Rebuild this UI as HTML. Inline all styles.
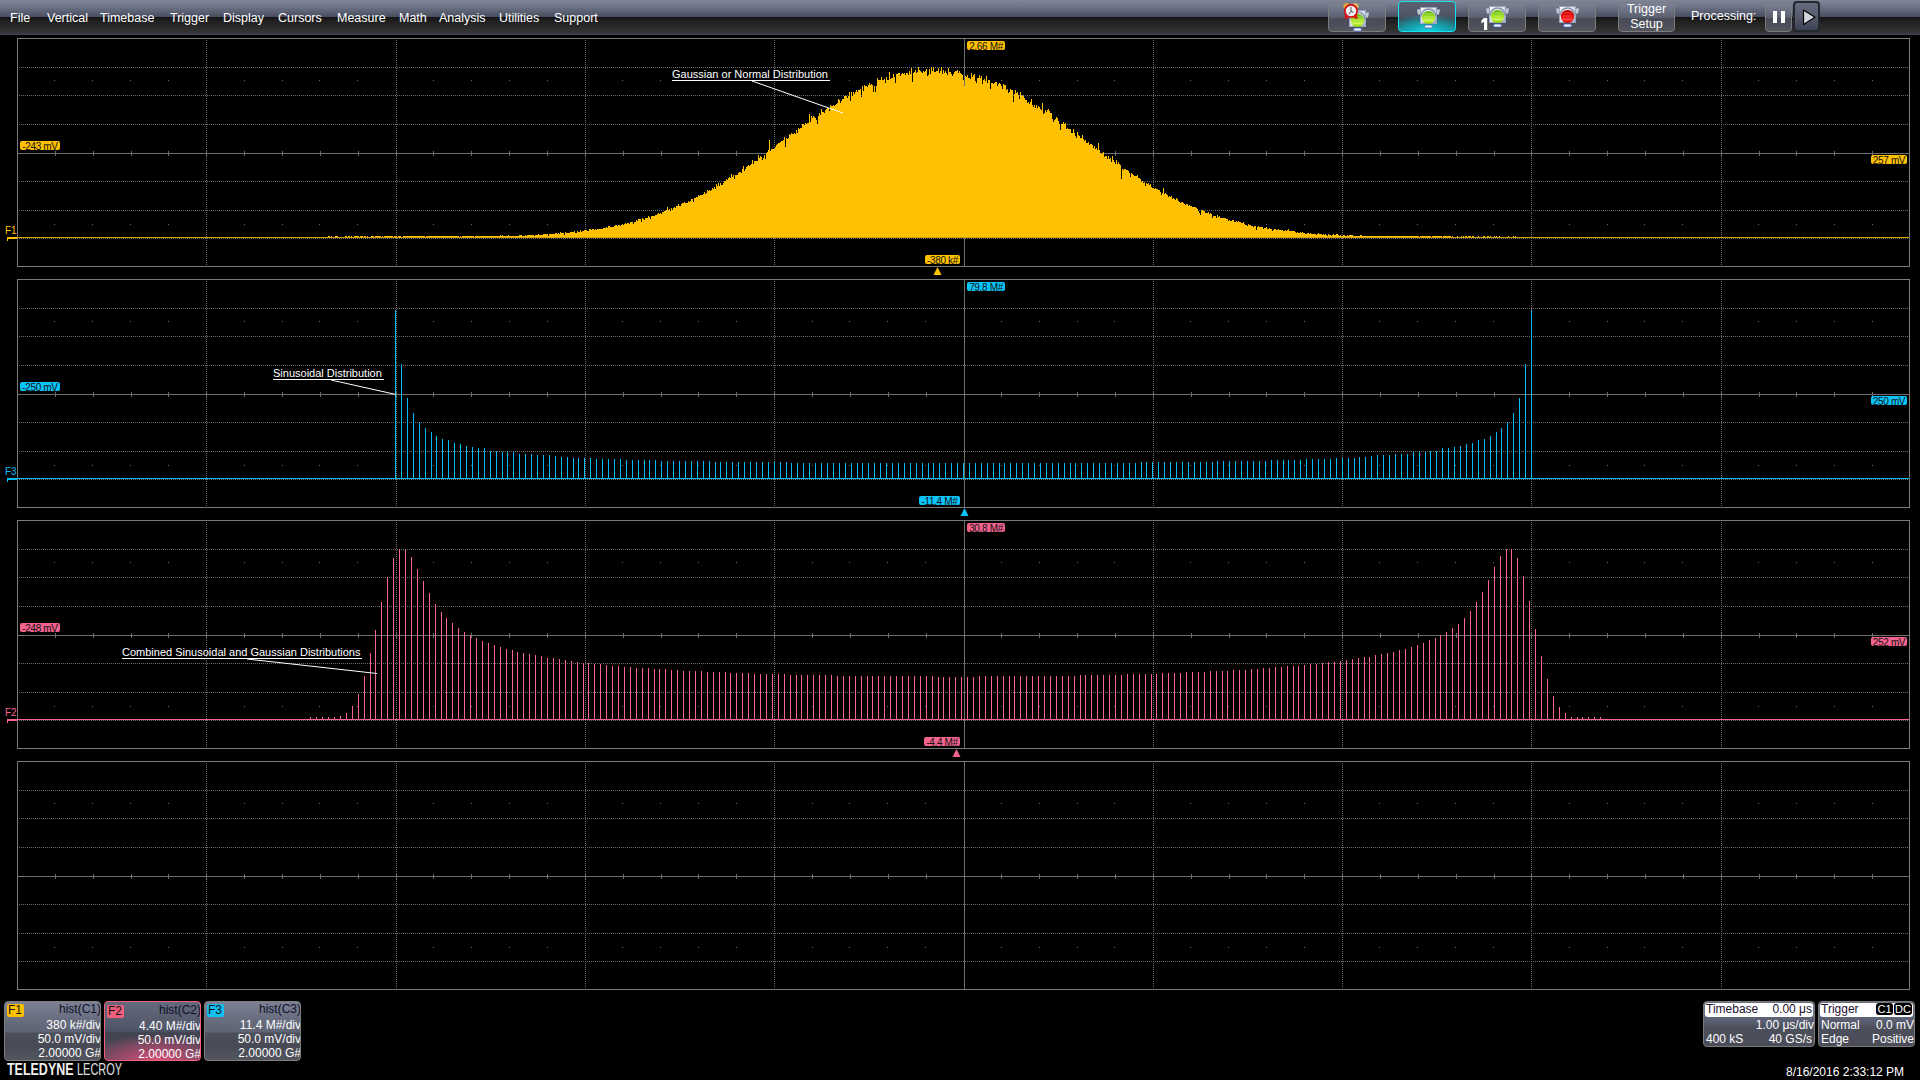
<!DOCTYPE html>
<html><head><meta charset="utf-8">
<style>
html,body{margin:0;padding:0;background:#000;width:1920px;height:1080px;overflow:hidden;}
body{position:relative;font-family:"Liberation Sans",sans-serif;}
#menubar{position:absolute;left:0;top:0;width:1920px;height:35px;
 background:linear-gradient(to bottom,#80869a 0px,#737a8c 5px,#5e6376 11px,#474c5f 16.9px,#131313 17px,#1b1b1b 19px,#222 23px,#2c2c2c 28px,#343434 33px,#3b414e 34px,#3b414e 35px);}
.mi{position:absolute;top:11px;font-size:12.5px;line-height:14px;color:#fff;white-space:nowrap;}
svg{position:absolute;left:0;top:0;}
.lbl{position:absolute;height:9px;font-size:10px;line-height:11px;color:#111;text-align:center;border-radius:2px;white-space:nowrap;overflow:hidden;letter-spacing:-0.35px;}
.btn{position:absolute;top:2px;width:56px;height:28px;border:1px solid #7c7c7c;border-radius:4px;
 background:linear-gradient(to bottom,#7d8394 0px,#6a7081 8px,#5b6070 14.5px,#4a4d57 15px,#4c4f59 22px,#54575f 28px);}
.btn.sel{border-color:#10e4f2;background:radial-gradient(ellipse 75% 60% at 50% 100%,rgba(20,215,225,0.95) 0%,rgba(16,170,182,0.8) 50%,rgba(16,120,130,0) 100%),linear-gradient(to bottom,#5c6172 0px,#535869 10px,#4a4e5e 16px,#3e4452 17px,#2f5a66 24px,#1f8f9a 29px);}
.txt{position:absolute;color:#fff;white-space:nowrap;}
.desc{position:absolute;top:1001px;width:95px;height:58px;border:1px solid #7e7e7e;border-radius:4px;overflow:hidden;
 background:linear-gradient(to bottom,#7b8193 0px,#6b7082 14px,#5f6474 30px,#4d505b 31px,#474a55 44px,#53565f 58px);}
.desc .badge{position:absolute;left:2px;top:2px;width:17px;height:13px;border-radius:2px;font-size:12px;line-height:13px;color:#111;text-indent:1px;}
.desc .l{position:absolute;right:-1px;font-size:12px;line-height:14px;color:#fff;white-space:nowrap;}
.desc .h{color:#10102a;}
.info{position:absolute;top:1001px;height:44px;border:1px solid #7a7a7a;border-radius:4px;overflow:hidden;
 background:linear-gradient(to bottom,#6a7080 0px,#6a7080 15px,#5f6577 15px,#565b6b 21px,#4c4f5c 25px,#4a4d58 44px);}
.info .ws{position:absolute;left:1px;right:1px;top:1px;height:14px;background:#fff;border-radius:3px;}
.info .r{position:absolute;font-size:12px;line-height:14px;color:#fff;white-space:nowrap;}
.info .dk{color:#1c1030;}
</style></head><body>
<div id="menubar"></div>
<span class="mi" style="left:10px">File</span>
<span class="mi" style="left:47px">Vertical</span>
<span class="mi" style="left:100px">Timebase</span>
<span class="mi" style="left:170px">Trigger</span>
<span class="mi" style="left:223px">Display</span>
<span class="mi" style="left:278px">Cursors</span>
<span class="mi" style="left:337px">Measure</span>
<span class="mi" style="left:399px">Math</span>
<span class="mi" style="left:439px">Analysis</span>
<span class="mi" style="left:499px">Utilities</span>
<span class="mi" style="left:554px">Support</span>
<!-- toolbar buttons -->
<div class="btn" style="left:1328px"></div>
<div class="btn sel" style="left:1398px;top:1px;height:29px"></div>
<div class="btn" style="left:1468px"></div>
<div class="btn" style="left:1538px"></div>
<svg width="1920" height="40" style="z-index:2">
 <defs>
  <linearGradient id="mon" x1="0" y1="0" x2="1" y2="1"><stop offset="0" stop-color="#ffffff"/><stop offset="0.55" stop-color="#d4dbea"/><stop offset="1" stop-color="#95a3c0"/></linearGradient>
  <linearGradient id="grn" x1="0" y1="0" x2="0" y2="1"><stop offset="0" stop-color="#5fae10"/><stop offset="0.35" stop-color="#8fd818"/><stop offset="0.75" stop-color="#c8f53a"/><stop offset="1" stop-color="#7cc010"/></linearGradient>
  <linearGradient id="red" x1="0" y1="0" x2="0" y2="1"><stop offset="0" stop-color="#b00000"/><stop offset="0.4" stop-color="#f00000"/><stop offset="0.8" stop-color="#ff2a2a"/><stop offset="1" stop-color="#c00000"/></linearGradient>
 </defs>
 <g transform="translate(1349,10)">
  <path d="M-3 2.5h3v5h-2zM17 2.5h3l-1 5h-2z" fill="#c4ccdc"/>
  <rect x="0" y="0" width="17" height="17" fill="url(#mon)"/>
  <rect x="0.5" y="0.5" width="16" height="16" fill="none" stroke="#9aa6bc" stroke-width="1"/>
  <path d="M1.0 9.5a7.5 7.5 0 0 1 15 0" fill="none" stroke="#8c95a8" stroke-width="1.6"/>
  <circle cx="8.5" cy="10.5" r="6.6" fill="url(#grn)"/>
  <path d="M4.5 7.0h8M3.5 10.0h10M4.0 13.0h9" stroke="#ffffff" stroke-opacity="0.35" stroke-width="0.9"/>
  <rect x="4.5" y="18" width="8" height="3" rx="1.5" fill="#eef3ff" stroke="#3f66c0" stroke-width="0.8"/>
 </g>
 <g transform="translate(1351,11)">
  <ellipse cx="-4.8" cy="-5.2" rx="3" ry="2.6" fill="#e2a440" transform="rotate(-35 -4.8 -5.2)"/>
  <ellipse cx="4.8" cy="-5.2" rx="3" ry="2.6" fill="#d8b868" transform="rotate(35 4.8 -5.2)"/>
  <path d="M-5.5 4L-7 7.5H-2.5ZM5.5 4L7 7.5H2.5Z" fill="#e00808"/>
  <circle cx="0" cy="0" r="7" fill="#d40a0a"/>
  <circle cx="0" cy="0" r="5.3" fill="#f2f2f4"/>
  <path d="M0 0V-4M0 0L2.5 1.5M0 0L-2 3.5" stroke="#404040" stroke-width="0.9"/>
 </g>
 <g transform="translate(1420,7)">
  <path d="M-3 2.5h3v5h-2zM17 2.5h3l-1 5h-2z" fill="#c4ccdc"/>
  <rect x="0" y="0" width="17" height="17" fill="url(#mon)"/>
  <rect x="0.5" y="0.5" width="16" height="16" fill="none" stroke="#9aa6bc" stroke-width="1"/>
  <path d="M1.0 9.5a7.5 7.5 0 0 1 15 0" fill="none" stroke="#8c95a8" stroke-width="1.6"/>
  <circle cx="8.5" cy="10.5" r="6.6" fill="url(#grn)"/>
  <path d="M4.5 7.0h8M3.5 10.0h10M4.0 13.0h9" stroke="#ffffff" stroke-opacity="0.35" stroke-width="0.9"/>
  <rect x="4.5" y="18" width="8" height="3" rx="1.5" fill="#eef3ff" stroke="#3f66c0" stroke-width="0.8"/>
 </g>
 <g transform="translate(1489,6)">
  <path d="M-3 2.5h3v5h-2zM17 2.5h3l-1 5h-2z" fill="#c4ccdc"/>
  <rect x="0" y="0" width="17" height="17" fill="url(#mon)"/>
  <rect x="0.5" y="0.5" width="16" height="16" fill="none" stroke="#9aa6bc" stroke-width="1"/>
  <path d="M1.0 9.5a7.5 7.5 0 0 1 15 0" fill="none" stroke="#8c95a8" stroke-width="1.6"/>
  <circle cx="8.5" cy="10.5" r="6.6" fill="url(#grn)"/>
  <path d="M4.5 7.0h8M3.5 10.0h10M4.0 13.0h9" stroke="#ffffff" stroke-opacity="0.35" stroke-width="0.9"/>
  <rect x="4.5" y="18" width="8" height="3" rx="1.5" fill="#eef3ff" stroke="#3f66c0" stroke-width="0.8"/>
 </g>
 <path d="M1484 18h3.2v12h-3.2v-8.2l-2.6 1.6v-2.8z" fill="#fff"/>
 <g transform="translate(1559,6)">
  <path d="M-3 2.5h3v5h-2zM17 2.5h3l-1 5h-2z" fill="#c4ccdc"/>
  <rect x="0" y="0" width="17" height="17" fill="url(#mon)"/>
  <rect x="0.5" y="0.5" width="16" height="16" fill="none" stroke="#9aa6bc" stroke-width="1"/>
  <path d="M1.0 9.5a7.5 7.5 0 0 1 15 0" fill="none" stroke="#8c95a8" stroke-width="1.6"/>
  <circle cx="8.5" cy="10.5" r="6.6" fill="url(#red)"/>
  <path d="M4.5 7.0h8M3.5 10.0h10M4.0 13.0h9" stroke="#ffffff" stroke-opacity="0.35" stroke-width="0.9"/>
  <rect x="4.5" y="18" width="8" height="3" rx="1.5" fill="#eef3ff" stroke="#3f66c0" stroke-width="0.8"/>
 </g>
</svg>
<div class="btn" style="left:1618px;width:55px"></div>
<div class="txt" style="left:1618px;top:2px;width:57px;text-align:center;font-size:12.5px;line-height:14.5px;z-index:3">Trigger<br>Setup</div>
<div class="txt" style="left:1691px;top:9px;font-size:12.5px;line-height:14px">Processing:</div>
<div class="btn" style="left:1765px;width:25px"></div>
<div style="position:absolute;left:1773px;top:11px;width:4px;height:12px;background:#fff;z-index:3"></div>
<div style="position:absolute;left:1781px;top:11px;width:4px;height:12px;background:#fff;z-index:3"></div>
<div class="btn" style="left:1793px;top:1px;width:23px;height:27px;border:2px solid #25272e;background:linear-gradient(to bottom,#666c7e 0px,#565b6c 14px,#454a5c 22px,#3a3f55 28px)"></div>
<svg width="1920" height="40" style="z-index:3"><path d="M1803.5 10L1815 17.2L1803.5 24.5Z" fill="#d4d6de" stroke="#000" stroke-width="1.2" stroke-linejoin="round"/></svg>

<svg width="1920" height="1000" font-family="Liberation Sans">
<path d="M19 67.5H1908" stroke="#6e6e6e" stroke-dasharray="1 1"/>
<path d="M19 95.5H1908" stroke="#6e6e6e" stroke-dasharray="1 1"/>
<path d="M19 124.5H1908" stroke="#6e6e6e" stroke-dasharray="1 1"/>
<path d="M19 181.5H1908" stroke="#6e6e6e" stroke-dasharray="1 1"/>
<path d="M19 210.5H1908" stroke="#6e6e6e" stroke-dasharray="1 1"/>
<path d="M19 238.5H1908" stroke="#6e6e6e" stroke-dasharray="1 1"/>
<path d="M206.5 40V265" stroke="#6e6e6e" stroke-dasharray="1 1"/>
<path d="M396.5 40V265" stroke="#6e6e6e" stroke-dasharray="1 1"/>
<path d="M585.5 40V265" stroke="#6e6e6e" stroke-dasharray="1 1"/>
<path d="M774.5 40V265" stroke="#6e6e6e" stroke-dasharray="1 1"/>
<path d="M1153.5 40V265" stroke="#6e6e6e" stroke-dasharray="1 1"/>
<path d="M1342.5 40V265" stroke="#6e6e6e" stroke-dasharray="1 1"/>
<path d="M1531.5 40V265" stroke="#6e6e6e" stroke-dasharray="1 1"/>
<path d="M1721.5 40V265" stroke="#6e6e6e" stroke-dasharray="1 1"/>
<path d="M17 153.5H1909" stroke="#6e6e6e"/>
<path d="M964.5 38V266" stroke="#6e6e6e"/>
<path d="M55.5 151v5M93.5 151v5M131.5 151v5M168.5 151v5M206.5 151v5M244.5 151v5M282.5 151v5M320.5 151v5M358.5 151v5M396.5 151v5M433.5 151v5M471.5 151v5M509.5 151v5M547.5 151v5M585.5 151v5M623.5 151v5M661.5 151v5M698.5 151v5M736.5 151v5M774.5 151v5M812.5 151v5M850.5 151v5M888.5 151v5M926.5 151v5M964.5 151v5M1001.5 151v5M1039.5 151v5M1077.5 151v5M1115.5 151v5M1153.5 151v5M1191.5 151v5M1229.5 151v5M1266.5 151v5M1304.5 151v5M1342.5 151v5M1380.5 151v5M1418.5 151v5M1456.5 151v5M1494.5 151v5M1531.5 151v5M1569.5 151v5M1607.5 151v5M1645.5 151v5M1683.5 151v5M1721.5 151v5M1759.5 151v5M1796.5 151v5M1834.5 151v5M1872.5 151v5" stroke="#6e6e6e"/>
<path d="M54 80h1v1h-1zM92 80h1v1h-1zM130 80h1v1h-1zM168 80h1v1h-1zM244 80h1v1h-1zM282 80h1v1h-1zM319 80h1v1h-1zM357 80h1v1h-1zM433 80h1v1h-1zM471 80h1v1h-1zM509 80h1v1h-1zM547 80h1v1h-1zM622 80h1v1h-1zM660 80h1v1h-1zM698 80h1v1h-1zM736 80h1v1h-1zM812 80h1v1h-1zM849 80h1v1h-1zM887 80h1v1h-1zM925 80h1v1h-1zM1001 80h1v1h-1zM1039 80h1v1h-1zM1077 80h1v1h-1zM1114 80h1v1h-1zM1190 80h1v1h-1zM1228 80h1v1h-1zM1266 80h1v1h-1zM1304 80h1v1h-1zM1379 80h1v1h-1zM1417 80h1v1h-1zM1455 80h1v1h-1zM1493 80h1v1h-1zM1569 80h1v1h-1zM1607 80h1v1h-1zM1644 80h1v1h-1zM1682 80h1v1h-1zM1758 80h1v1h-1zM1796 80h1v1h-1zM1834 80h1v1h-1zM1872 80h1v1h-1zM54 224h1v1h-1zM92 224h1v1h-1zM130 224h1v1h-1zM168 224h1v1h-1zM244 224h1v1h-1zM282 224h1v1h-1zM319 224h1v1h-1zM357 224h1v1h-1zM433 224h1v1h-1zM471 224h1v1h-1zM509 224h1v1h-1zM547 224h1v1h-1zM622 224h1v1h-1zM660 224h1v1h-1zM698 224h1v1h-1zM736 224h1v1h-1zM812 224h1v1h-1zM849 224h1v1h-1zM887 224h1v1h-1zM925 224h1v1h-1zM1001 224h1v1h-1zM1039 224h1v1h-1zM1077 224h1v1h-1zM1114 224h1v1h-1zM1190 224h1v1h-1zM1228 224h1v1h-1zM1266 224h1v1h-1zM1304 224h1v1h-1zM1379 224h1v1h-1zM1417 224h1v1h-1zM1455 224h1v1h-1zM1493 224h1v1h-1zM1569 224h1v1h-1zM1607 224h1v1h-1zM1644 224h1v1h-1zM1682 224h1v1h-1zM1758 224h1v1h-1zM1796 224h1v1h-1zM1834 224h1v1h-1zM1872 224h1v1h-1z" fill="#6e6e6e"/>
<rect x="17.5" y="38.5" width="1892" height="228" fill="none" stroke="#7a7a7a"/>
<path d="M19 308.5H1908" stroke="#6e6e6e" stroke-dasharray="1 1"/>
<path d="M19 336.5H1908" stroke="#6e6e6e" stroke-dasharray="1 1"/>
<path d="M19 365.5H1908" stroke="#6e6e6e" stroke-dasharray="1 1"/>
<path d="M19 422.5H1908" stroke="#6e6e6e" stroke-dasharray="1 1"/>
<path d="M19 451.5H1908" stroke="#6e6e6e" stroke-dasharray="1 1"/>
<path d="M19 479.5H1908" stroke="#6e6e6e" stroke-dasharray="1 1"/>
<path d="M206.5 281V506" stroke="#6e6e6e" stroke-dasharray="1 1"/>
<path d="M396.5 281V506" stroke="#6e6e6e" stroke-dasharray="1 1"/>
<path d="M585.5 281V506" stroke="#6e6e6e" stroke-dasharray="1 1"/>
<path d="M774.5 281V506" stroke="#6e6e6e" stroke-dasharray="1 1"/>
<path d="M1153.5 281V506" stroke="#6e6e6e" stroke-dasharray="1 1"/>
<path d="M1342.5 281V506" stroke="#6e6e6e" stroke-dasharray="1 1"/>
<path d="M1531.5 281V506" stroke="#6e6e6e" stroke-dasharray="1 1"/>
<path d="M1721.5 281V506" stroke="#6e6e6e" stroke-dasharray="1 1"/>
<path d="M17 394.5H1909" stroke="#6e6e6e"/>
<path d="M964.5 279V507" stroke="#6e6e6e"/>
<path d="M55.5 392v5M93.5 392v5M131.5 392v5M168.5 392v5M206.5 392v5M244.5 392v5M282.5 392v5M320.5 392v5M358.5 392v5M396.5 392v5M433.5 392v5M471.5 392v5M509.5 392v5M547.5 392v5M585.5 392v5M623.5 392v5M661.5 392v5M698.5 392v5M736.5 392v5M774.5 392v5M812.5 392v5M850.5 392v5M888.5 392v5M926.5 392v5M964.5 392v5M1001.5 392v5M1039.5 392v5M1077.5 392v5M1115.5 392v5M1153.5 392v5M1191.5 392v5M1229.5 392v5M1266.5 392v5M1304.5 392v5M1342.5 392v5M1380.5 392v5M1418.5 392v5M1456.5 392v5M1494.5 392v5M1531.5 392v5M1569.5 392v5M1607.5 392v5M1645.5 392v5M1683.5 392v5M1721.5 392v5M1759.5 392v5M1796.5 392v5M1834.5 392v5M1872.5 392v5" stroke="#6e6e6e"/>
<path d="M54 321h1v1h-1zM92 321h1v1h-1zM130 321h1v1h-1zM168 321h1v1h-1zM244 321h1v1h-1zM282 321h1v1h-1zM319 321h1v1h-1zM357 321h1v1h-1zM433 321h1v1h-1zM471 321h1v1h-1zM509 321h1v1h-1zM547 321h1v1h-1zM622 321h1v1h-1zM660 321h1v1h-1zM698 321h1v1h-1zM736 321h1v1h-1zM812 321h1v1h-1zM849 321h1v1h-1zM887 321h1v1h-1zM925 321h1v1h-1zM1001 321h1v1h-1zM1039 321h1v1h-1zM1077 321h1v1h-1zM1114 321h1v1h-1zM1190 321h1v1h-1zM1228 321h1v1h-1zM1266 321h1v1h-1zM1304 321h1v1h-1zM1379 321h1v1h-1zM1417 321h1v1h-1zM1455 321h1v1h-1zM1493 321h1v1h-1zM1569 321h1v1h-1zM1607 321h1v1h-1zM1644 321h1v1h-1zM1682 321h1v1h-1zM1758 321h1v1h-1zM1796 321h1v1h-1zM1834 321h1v1h-1zM1872 321h1v1h-1zM54 465h1v1h-1zM92 465h1v1h-1zM130 465h1v1h-1zM168 465h1v1h-1zM244 465h1v1h-1zM282 465h1v1h-1zM319 465h1v1h-1zM357 465h1v1h-1zM433 465h1v1h-1zM471 465h1v1h-1zM509 465h1v1h-1zM547 465h1v1h-1zM622 465h1v1h-1zM660 465h1v1h-1zM698 465h1v1h-1zM736 465h1v1h-1zM812 465h1v1h-1zM849 465h1v1h-1zM887 465h1v1h-1zM925 465h1v1h-1zM1001 465h1v1h-1zM1039 465h1v1h-1zM1077 465h1v1h-1zM1114 465h1v1h-1zM1190 465h1v1h-1zM1228 465h1v1h-1zM1266 465h1v1h-1zM1304 465h1v1h-1zM1379 465h1v1h-1zM1417 465h1v1h-1zM1455 465h1v1h-1zM1493 465h1v1h-1zM1569 465h1v1h-1zM1607 465h1v1h-1zM1644 465h1v1h-1zM1682 465h1v1h-1zM1758 465h1v1h-1zM1796 465h1v1h-1zM1834 465h1v1h-1zM1872 465h1v1h-1z" fill="#6e6e6e"/>
<rect x="17.5" y="279.5" width="1892" height="228" fill="none" stroke="#7a7a7a"/>
<path d="M19 549.5H1908" stroke="#6e6e6e" stroke-dasharray="1 1"/>
<path d="M19 577.5H1908" stroke="#6e6e6e" stroke-dasharray="1 1"/>
<path d="M19 606.5H1908" stroke="#6e6e6e" stroke-dasharray="1 1"/>
<path d="M19 663.5H1908" stroke="#6e6e6e" stroke-dasharray="1 1"/>
<path d="M19 692.5H1908" stroke="#6e6e6e" stroke-dasharray="1 1"/>
<path d="M19 720.5H1908" stroke="#6e6e6e" stroke-dasharray="1 1"/>
<path d="M206.5 522V747" stroke="#6e6e6e" stroke-dasharray="1 1"/>
<path d="M396.5 522V747" stroke="#6e6e6e" stroke-dasharray="1 1"/>
<path d="M585.5 522V747" stroke="#6e6e6e" stroke-dasharray="1 1"/>
<path d="M774.5 522V747" stroke="#6e6e6e" stroke-dasharray="1 1"/>
<path d="M1153.5 522V747" stroke="#6e6e6e" stroke-dasharray="1 1"/>
<path d="M1342.5 522V747" stroke="#6e6e6e" stroke-dasharray="1 1"/>
<path d="M1531.5 522V747" stroke="#6e6e6e" stroke-dasharray="1 1"/>
<path d="M1721.5 522V747" stroke="#6e6e6e" stroke-dasharray="1 1"/>
<path d="M17 635.5H1909" stroke="#6e6e6e"/>
<path d="M964.5 520V748" stroke="#6e6e6e"/>
<path d="M55.5 633v5M93.5 633v5M131.5 633v5M168.5 633v5M206.5 633v5M244.5 633v5M282.5 633v5M320.5 633v5M358.5 633v5M396.5 633v5M433.5 633v5M471.5 633v5M509.5 633v5M547.5 633v5M585.5 633v5M623.5 633v5M661.5 633v5M698.5 633v5M736.5 633v5M774.5 633v5M812.5 633v5M850.5 633v5M888.5 633v5M926.5 633v5M964.5 633v5M1001.5 633v5M1039.5 633v5M1077.5 633v5M1115.5 633v5M1153.5 633v5M1191.5 633v5M1229.5 633v5M1266.5 633v5M1304.5 633v5M1342.5 633v5M1380.5 633v5M1418.5 633v5M1456.5 633v5M1494.5 633v5M1531.5 633v5M1569.5 633v5M1607.5 633v5M1645.5 633v5M1683.5 633v5M1721.5 633v5M1759.5 633v5M1796.5 633v5M1834.5 633v5M1872.5 633v5" stroke="#6e6e6e"/>
<path d="M54 562h1v1h-1zM92 562h1v1h-1zM130 562h1v1h-1zM168 562h1v1h-1zM244 562h1v1h-1zM282 562h1v1h-1zM319 562h1v1h-1zM357 562h1v1h-1zM433 562h1v1h-1zM471 562h1v1h-1zM509 562h1v1h-1zM547 562h1v1h-1zM622 562h1v1h-1zM660 562h1v1h-1zM698 562h1v1h-1zM736 562h1v1h-1zM812 562h1v1h-1zM849 562h1v1h-1zM887 562h1v1h-1zM925 562h1v1h-1zM1001 562h1v1h-1zM1039 562h1v1h-1zM1077 562h1v1h-1zM1114 562h1v1h-1zM1190 562h1v1h-1zM1228 562h1v1h-1zM1266 562h1v1h-1zM1304 562h1v1h-1zM1379 562h1v1h-1zM1417 562h1v1h-1zM1455 562h1v1h-1zM1493 562h1v1h-1zM1569 562h1v1h-1zM1607 562h1v1h-1zM1644 562h1v1h-1zM1682 562h1v1h-1zM1758 562h1v1h-1zM1796 562h1v1h-1zM1834 562h1v1h-1zM1872 562h1v1h-1zM54 706h1v1h-1zM92 706h1v1h-1zM130 706h1v1h-1zM168 706h1v1h-1zM244 706h1v1h-1zM282 706h1v1h-1zM319 706h1v1h-1zM357 706h1v1h-1zM433 706h1v1h-1zM471 706h1v1h-1zM509 706h1v1h-1zM547 706h1v1h-1zM622 706h1v1h-1zM660 706h1v1h-1zM698 706h1v1h-1zM736 706h1v1h-1zM812 706h1v1h-1zM849 706h1v1h-1zM887 706h1v1h-1zM925 706h1v1h-1zM1001 706h1v1h-1zM1039 706h1v1h-1zM1077 706h1v1h-1zM1114 706h1v1h-1zM1190 706h1v1h-1zM1228 706h1v1h-1zM1266 706h1v1h-1zM1304 706h1v1h-1zM1379 706h1v1h-1zM1417 706h1v1h-1zM1455 706h1v1h-1zM1493 706h1v1h-1zM1569 706h1v1h-1zM1607 706h1v1h-1zM1644 706h1v1h-1zM1682 706h1v1h-1zM1758 706h1v1h-1zM1796 706h1v1h-1zM1834 706h1v1h-1zM1872 706h1v1h-1z" fill="#6e6e6e"/>
<rect x="17.5" y="520.5" width="1892" height="228" fill="none" stroke="#7a7a7a"/>
<path d="M19 790.5H1908" stroke="#6e6e6e" stroke-dasharray="1 1"/>
<path d="M19 818.5H1908" stroke="#6e6e6e" stroke-dasharray="1 1"/>
<path d="M19 847.5H1908" stroke="#6e6e6e" stroke-dasharray="1 1"/>
<path d="M19 904.5H1908" stroke="#6e6e6e" stroke-dasharray="1 1"/>
<path d="M19 933.5H1908" stroke="#6e6e6e" stroke-dasharray="1 1"/>
<path d="M19 961.5H1908" stroke="#6e6e6e" stroke-dasharray="1 1"/>
<path d="M206.5 763V988" stroke="#6e6e6e" stroke-dasharray="1 1"/>
<path d="M396.5 763V988" stroke="#6e6e6e" stroke-dasharray="1 1"/>
<path d="M585.5 763V988" stroke="#6e6e6e" stroke-dasharray="1 1"/>
<path d="M774.5 763V988" stroke="#6e6e6e" stroke-dasharray="1 1"/>
<path d="M1153.5 763V988" stroke="#6e6e6e" stroke-dasharray="1 1"/>
<path d="M1342.5 763V988" stroke="#6e6e6e" stroke-dasharray="1 1"/>
<path d="M1531.5 763V988" stroke="#6e6e6e" stroke-dasharray="1 1"/>
<path d="M1721.5 763V988" stroke="#6e6e6e" stroke-dasharray="1 1"/>
<path d="M17 876.5H1909" stroke="#6e6e6e"/>
<path d="M964.5 761V989" stroke="#6e6e6e"/>
<path d="M55.5 874v5M93.5 874v5M131.5 874v5M168.5 874v5M206.5 874v5M244.5 874v5M282.5 874v5M320.5 874v5M358.5 874v5M396.5 874v5M433.5 874v5M471.5 874v5M509.5 874v5M547.5 874v5M585.5 874v5M623.5 874v5M661.5 874v5M698.5 874v5M736.5 874v5M774.5 874v5M812.5 874v5M850.5 874v5M888.5 874v5M926.5 874v5M964.5 874v5M1001.5 874v5M1039.5 874v5M1077.5 874v5M1115.5 874v5M1153.5 874v5M1191.5 874v5M1229.5 874v5M1266.5 874v5M1304.5 874v5M1342.5 874v5M1380.5 874v5M1418.5 874v5M1456.5 874v5M1494.5 874v5M1531.5 874v5M1569.5 874v5M1607.5 874v5M1645.5 874v5M1683.5 874v5M1721.5 874v5M1759.5 874v5M1796.5 874v5M1834.5 874v5M1872.5 874v5" stroke="#6e6e6e"/>
<path d="M54 803h1v1h-1zM92 803h1v1h-1zM130 803h1v1h-1zM168 803h1v1h-1zM244 803h1v1h-1zM282 803h1v1h-1zM319 803h1v1h-1zM357 803h1v1h-1zM433 803h1v1h-1zM471 803h1v1h-1zM509 803h1v1h-1zM547 803h1v1h-1zM622 803h1v1h-1zM660 803h1v1h-1zM698 803h1v1h-1zM736 803h1v1h-1zM812 803h1v1h-1zM849 803h1v1h-1zM887 803h1v1h-1zM925 803h1v1h-1zM1001 803h1v1h-1zM1039 803h1v1h-1zM1077 803h1v1h-1zM1114 803h1v1h-1zM1190 803h1v1h-1zM1228 803h1v1h-1zM1266 803h1v1h-1zM1304 803h1v1h-1zM1379 803h1v1h-1zM1417 803h1v1h-1zM1455 803h1v1h-1zM1493 803h1v1h-1zM1569 803h1v1h-1zM1607 803h1v1h-1zM1644 803h1v1h-1zM1682 803h1v1h-1zM1758 803h1v1h-1zM1796 803h1v1h-1zM1834 803h1v1h-1zM1872 803h1v1h-1zM54 947h1v1h-1zM92 947h1v1h-1zM130 947h1v1h-1zM168 947h1v1h-1zM244 947h1v1h-1zM282 947h1v1h-1zM319 947h1v1h-1zM357 947h1v1h-1zM433 947h1v1h-1zM471 947h1v1h-1zM509 947h1v1h-1zM547 947h1v1h-1zM622 947h1v1h-1zM660 947h1v1h-1zM698 947h1v1h-1zM736 947h1v1h-1zM812 947h1v1h-1zM849 947h1v1h-1zM887 947h1v1h-1zM925 947h1v1h-1zM1001 947h1v1h-1zM1039 947h1v1h-1zM1077 947h1v1h-1zM1114 947h1v1h-1zM1190 947h1v1h-1zM1228 947h1v1h-1zM1266 947h1v1h-1zM1304 947h1v1h-1zM1379 947h1v1h-1zM1417 947h1v1h-1zM1455 947h1v1h-1zM1493 947h1v1h-1zM1569 947h1v1h-1zM1607 947h1v1h-1zM1644 947h1v1h-1zM1682 947h1v1h-1zM1758 947h1v1h-1zM1796 947h1v1h-1zM1834 947h1v1h-1zM1872 947h1v1h-1z" fill="#6e6e6e"/>
<rect x="17.5" y="761.5" width="1892" height="228" fill="none" stroke="#7a7a7a"/>
<path d="M18 238V237H19V237H20V237H21V237H22V237H23V237H24V237H25V237H26V237H27V237H28V237H29V237H30V237H31V237H32V237H33V237H34V237H35V237H36V237H37V237H38V237H39V237H40V237H41V237H42V237H43V237H44V237H45V237H46V237H47V237H48V237H49V237H50V237H51V237H52V237H53V237H54V237H55V237H56V237H57V237H58V237H59V237H60V237H61V237H62V237H63V237H64V237H65V237H66V237H67V237H68V237H69V237H70V237H71V237H72V237H73V237H74V237H75V237H76V237H77V237H78V237H79V237H80V237H81V237H82V237H83V237H84V237H85V237H86V237H87V237H88V237H89V237H90V237H91V237H92V237H93V237H94V237H95V237H96V237H97V237H98V237H99V237H100V237H101V237H102V237H103V237H104V237H105V237H106V237H107V237H108V237H109V237H110V237H111V237H112V237H113V237H114V237H115V237H116V237H117V237H118V237H119V237H120V237H121V237H122V237H123V237H124V237H125V237H126V237H127V237H128V237H129V237H130V237H131V237H132V237H133V237H134V237H135V237H136V237H137V237H138V237H139V237H140V237H141V237H142V237H143V237H144V237H145V237H146V237H147V237H148V237H149V237H150V237H151V237H152V237H153V237H154V237H155V237H156V237H157V237H158V237H159V237H160V237H161V237H162V237H163V237H164V237H165V237H166V237H167V237H168V237H169V237H170V237H171V237H172V237H173V237H174V237H175V237H176V237H177V237H178V237H179V237H180V237H181V237H182V237H183V237H184V237H185V237H186V237H187V237H188V237H189V237H190V237H191V237H192V237H193V237H194V237H195V237H196V237H197V237H198V237H199V237H200V237H201V237H202V237H203V237H204V237H205V237H206V237H207V237H208V237H209V237H210V237H211V237H212V237H213V237H214V237H215V237H216V237H217V237H218V237H219V237H220V237H221V237H222V237H223V237H224V237H225V237H226V237H227V237H228V237H229V237H230V237H231V237H232V237H233V237H234V237H235V237H236V237H237V237H238V237H239V237H240V237H241V237H242V237H243V237H244V237H245V237H246V237H247V237H248V237H249V237H250V237H251V237H252V237H253V237H254V237H255V237H256V237H257V237H258V237H259V237H260V237H261V237H262V237H263V237H264V237H265V237H266V237H267V237H268V237H269V237H270V237H271V237H272V237H273V237H274V237H275V237H276V237H277V237H278V237H279V237H280V237H281V237H282V237H283V237H284V237H285V237H286V237H287V237H288V237H289V237H290V237H291V237H292V237H293V237H294V237H295V237H296V237H297V237H298V237H299V237H300V237H301V237H302V237H303V237H304V237H305V237H306V237H307V237H308V237H309V237H310V237H311V237H312V237H313V237H314V237H315V237H316V237H317V237H318V237H319V237H320V237H321V237H322V237H323V237H324V237H325V237H326V237H327V237H328V236H329V236H330V237H331V236H332V237H333V237H334V237H335V236H336V236H337V236H338V237H339V237H340V237H341V237H342V237H343V237H344V237H345V236H346V236H347V237H348V236H349V236H350V237H351V236H352V237H353V237H354V236H355V236H356V236H357V236H358V236H359V237H360V236H361V236H362V236H363V237H364V236H365V236H366V237H367V236H368V237H369V237H370V237H371V236H372V236H373V236H374V237H375V236H376V236H377V236H378V236H379V236H380V236H381V237H382V236H383V237H384V236H385V236H386V236H387V236H388V236H389V236H390V236H391V236H392V236H393V237H394V236H395V236H396V236H397V237H398V236H399V236H400V236H401V237H402V237H403V236H404V236H405V236H406V236H407V236H408V236H409V236H410V236H411V236H412V236H413V236H414V236H415V236H416V236H417V236H418V236H419V236H420V236H421V236H422V236H423V236H424V236H425V237H426V236H427V236H428V236H429V236H430V236H431V236H432V236H433V236H434V236H435V236H436V236H437V236H438V236H439V236H440V236H441V236H442V236H443V236H444V236H445V236H446V236H447V236H448V236H449V236H450V236H451V236H452V236H453V236H454V236H455V236H456V236H457V236H458V236H459V237H460V236H461V237H462V236H463V236H464V236H465V236H466V236H467V236H468V236H469V236H470V236H471V236H472V236H473V236H474V237H475V236H476V236H477V236H478V236H479V236H480V236H481V236H482V236H483V236H484V236H485V236H486V236H487V236H488V236H489V236H490V236H491V236H492V236H493V236H494V236H495V236H496V236H497V236H498V236H499V236H500V235H501V236H502V235H503V236H504V236H505V236H506V236H507V236H508V235H509V236H510V236H511V236H512V236H513V236H514V236H515V236H516V236H517V236H518V236H519V235H520V235H521V235H522V236H523V236H524V236H525V235H526V236H527V235H528V235H529V235H530V235H531V235H532V235H533V235H534V236H535V235H536V235H537V235H538V234H539V235H540V235H541V235H542V235H543V234H544V234H545V234H546V234H547V234H548V236H549V234H550V234H551V234H552V234H553V234H554V234H555V233H556V233H557V234H558V233H559V234H560V232H561V233H562V233H563V233H564V235H565V232H566V233H567V233H568V233H569V233H570V232H571V232H572V232H573V232H574V231H575V233H576V233H577V231H578V232H579V232H580V230H581V232H582V231H583V231H584V230H585V230H586V230H587V231H588V231H589V229H590V229H591V230H592V229H593V229H594V230H595V229H596V230H597V229H598V229H599V229H600V229H601V229H602V229H603V228H604V228H605V228H606V227H607V228H608V226H609V226H610V227H611V227H612V227H613V227H614V226H615V225H616V225H617V226H618V225H619V225H620V226H621V225H622V224H623V225H624V224H625V223H626V224H627V223H628V223H629V224H630V222H631V222H632V222H633V224H634V222H635V222H636V220H637V221H638V219H639V219H640V219H641V222H642V218H643V219H644V220H645V218H646V218H647V218H648V216H649V217H650V219H651V216H652V216H653V216H654V216H655V215H656V215H657V214H658V213H659V214H660V213H661V214H662V212H663V212H664V211H665V211H666V210H667V207H668V210H669V209H670V211H671V208H672V210H673V208H674V207H675V208H676V206H677V206H678V204H679V206H680V206H681V204H682V203H683V203H684V202H685V203H686V203H687V203H688V201H689V202H690V201H691V199H692V199H693V202H694V198H695V198H696V197H697V197H698V195H699V196H700V195H701V195H702V195H703V194H704V192H705V194H706V193H707V190H708V191H709V190H710V191H711V190H712V188H713V189H714V187H715V189H716V184H717V186H718V183H719V186H720V183H721V185H722V185H723V183H724V181H725V181H726V179H727V180H728V178H729V177H730V178H731V174H732V177H733V175H734V179H735V175H736V175H737V175H738V173H739V172H740V172H741V173H742V169H743V166H744V171H745V169H746V167H747V166H748V165H749V166H750V165H751V164H752V160H753V164H754V161H755V161H756V161H757V161H758V155H759V158H760V156H761V157H762V160H763V158H764V155H765V159H766V153H767V152H768V150H769V140H770V151H771V149H772V149H773V149H774V149H775V147H776V145H777V144H778V143H779V143H780V142H781V141H782V141H783V140H784V137H785V147H786V138H787V139H788V138H789V134H790V135H791V133H792V134H793V134H794V133H795V134H796V130H797V133H798V128H799V129H800V128H801V128H802V124H803V124H804V125H805V123H806V124H807V123H808V123H809V114H810V122H811V116H812V118H813V116H814V117H815V118H816V120H817V124H818V116H819V113H820V115H821V109H822V112H823V112H824V113H825V110H826V109H827V108H828V108H829V111H830V105H831V106H832V106H833V105H834V106H835V105H836V104H837V103H838V99H839V100H840V103H841V101H842V99H843V99H844V96H845V96H846V96H847V98H848V96H849V92H850V101H851V92H852V96H853V92H854V94H855V92H856V90H857V92H858V90H859V90H860V89H861V97H862V86H863V91H864V85H865V86H866V86H867V87H868V85H869V83H870V85H871V84H872V85H873V92H874V86H875V92H876V86H877V78H878V80H879V80H880V80H881V77H882V80H883V80H884V79H885V83H886V77H887V80H888V80H889V72H890V79H891V78H892V78H893V74H894V77H895V83H896V74H897V74H898V73H899V73H900V76H901V74H902V73H903V74H904V73H905V75H906V73H907V73H908V75H909V71H910V74H911V68H912V82H913V73H914V72H915V70H916V73H917V72H918V67H919V70H920V71H921V72H922V73H923V71H924V72H925V71H926V69H927V76H928V75H929V69H930V74H931V67H932V71H933V67H934V72H935V72H936V71H937V71H938V68H939V73H940V71H941V67H942V74H943V70H944V73H945V71H946V73H947V75H948V68H949V72H950V72H951V74H952V76H953V74H954V72H955V71H956V71H957V70H958V73H959V71H960V73H961V74H962V75H963V80H964V86H965V76H966V77H967V75H968V78H969V78H970V79H971V73H972V77H973V75H974V74H975V81H976V83H977V78H978V78H979V75H980V78H981V76H982V84H983V80H984V79H985V81H986V76H987V83H988V80H989V80H990V89H991V83H992V83H993V84H994V83H995V82H996V82H997V86H998V84H999V83H1000V84H1001V86H1002V89H1003V84H1004V85H1005V85H1006V90H1007V89H1008V93H1009V92H1010V89H1011V90H1012V90H1013V102H1014V94H1015V90H1016V93H1017V92H1018V95H1019V99H1020V92H1021V96H1022V95H1023V96H1024V98H1025V100H1026V100H1027V103H1028V102H1029V104H1030V102H1031V99H1032V105H1033V107H1034V105H1035V108H1036V105H1037V108H1038V106H1039V107H1040V109H1041V110H1042V103H1043V114H1044V113H1045V110H1046V112H1047V110H1048V109H1049V111H1050V113H1051V113H1052V119H1053V122H1054V120H1055V119H1056V117H1057V118H1058V121H1059V124H1060V130H1061V124H1062V124H1063V122H1064V124H1065V123H1066V129H1067V128H1068V129H1069V129H1070V129H1071V133H1072V133H1073V129H1074V133H1075V136H1076V138H1077V132H1078V135H1079V136H1080V138H1081V138H1082V135H1083V139H1084V141H1085V140H1086V143H1087V143H1088V142H1089V145H1090V144H1091V144H1092V145H1093V148H1094V146H1095V149H1096V148H1097V150H1098V143H1099V150H1100V153H1101V154H1102V153H1103V152H1104V157H1105V156H1106V156H1107V159H1108V156H1109V159H1110V158H1111V162H1112V156H1113V160H1114V162H1115V164H1116V160H1117V164H1118V162H1119V164H1120V165H1121V179H1122V169H1123V170H1124V169H1125V169H1126V170H1127V170H1128V171H1129V173H1130V177H1131V173H1132V174H1133V175H1134V176H1135V176H1136V176H1137V175H1138V178H1139V178H1140V179H1141V182H1142V181H1143V183H1144V182H1145V186H1146V183H1147V184H1148V183H1149V185H1150V184H1151V187H1152V188H1153V188H1154V189H1155V188H1156V189H1157V189H1158V190H1159V190H1160V192H1161V195H1162V193H1163V188H1164V194H1165V193H1166V194H1167V195H1168V197H1169V196H1170V197H1171V196H1172V199H1173V198H1174V199H1175V200H1176V198H1177V199H1178V201H1179V202H1180V203H1181V202H1182V202H1183V203H1184V204H1185V205H1186V204H1187V204H1188V206H1189V205H1190V206H1191V206H1192V207H1193V207H1194V207H1195V207H1196V208H1197V209H1198V211H1199V213H1200V215H1201V210H1202V210H1203V211H1204V211H1205V213H1206V213H1207V213H1208V212H1209V214H1210V213H1211V214H1212V218H1213V216H1214V216H1215V216H1216V218H1217V215H1218V217H1219V216H1220V218H1221V218H1222V218H1223V218H1224V218H1225V218H1226V219H1227V219H1228V221H1229V220H1230V221H1231V221H1232V220H1233V220H1234V222H1235V222H1236V221H1237V222H1238V221H1239V222H1240V222H1241V223H1242V223H1243V222H1244V224H1245V225H1246V225H1247V226H1248V224H1249V225H1250V225H1251V226H1252V226H1253V227H1254V226H1255V226H1256V230H1257V227H1258V226H1259V227H1260V227H1261V227H1262V227H1263V229H1264V228H1265V228H1266V227H1267V229H1268V229H1269V228H1270V229H1271V229H1272V231H1273V230H1274V229H1275V229H1276V230H1277V230H1278V229H1279V230H1280V230H1281V230H1282V230H1283V231H1284V231H1285V230H1286V231H1287V230H1288V229H1289V231H1290V231H1291V231H1292V231H1293V231H1294V231H1295V232H1296V233H1297V232H1298V233H1299V233H1300V232H1301V233H1302V232H1303V233H1304V233H1305V234H1306V234H1307V233H1308V233H1309V234H1310V233H1311V234H1312V234H1313V234H1314V234H1315V234H1316V235H1317V234H1318V233H1319V234H1320V234H1321V234H1322V235H1323V234H1324V235H1325V234H1326V235H1327V236H1328V234H1329V235H1330V235H1331V236H1332V235H1333V234H1334V235H1335V235H1336V234H1337V234H1338V235H1339V236H1340V235H1341V236H1342V236H1343V235H1344V235H1345V236H1346V236H1347V235H1348V236H1349V235H1350V235H1351V235H1352V235H1353V236H1354V236H1355V236H1356V236H1357V236H1358V236H1359V236H1360V235H1361V235H1362V236H1363V236H1364V236H1365V236H1366V236H1367V236H1368V236H1369V236H1370V236H1371V236H1372V236H1373V236H1374V236H1375V236H1376V236H1377V236H1378V236H1379V236H1380V236H1381V236H1382V236H1383V236H1384V236H1385V236H1386V236H1387V236H1388V236H1389V236H1390V236H1391V236H1392V236H1393V236H1394V236H1395V236H1396V236H1397V236H1398V236H1399V236H1400V236H1401V236H1402V236H1403V236H1404V236H1405V236H1406V236H1407V236H1408V236H1409V236H1410V236H1411V236H1412V236H1413V236H1414V236H1415V236H1416V236H1417V236H1418V236H1419V237H1420V236H1421V236H1422V236H1423V236H1424V236H1425V236H1426V236H1427V236H1428V236H1429V236H1430V236H1431V237H1432V236H1433V236H1434V236H1435V236H1436V236H1437V236H1438V236H1439V236H1440V236H1441V236H1442V237H1443V236H1444V236H1445V236H1446V236H1447V236H1448V236H1449V236H1450V236H1451V237H1452V236H1453V237H1454V237H1455V237H1456V237H1457V236H1458V237H1459V237H1460V237H1461V236H1462V237H1463V236H1464V237H1465V236H1466V236H1467V237H1468V236H1469V236H1470V236H1471V237H1472V236H1473V236H1474V237H1475V237H1476V237H1477V237H1478V236H1479V237H1480V237H1481V237H1482V237H1483V236H1484V236H1485V237H1486V237H1487V236H1488V236H1489V237H1490V236H1491V237H1492V237H1493V237H1494V236H1495V237H1496V236H1497V237H1498V237H1499V236H1500V237H1501V237H1502V237H1503V237H1504V237H1505V237H1506V237H1507V237H1508V236H1509V237H1510V237H1511V237H1512V237H1513V236H1514V237H1515V236H1516V237H1517V237H1518V237H1519V237H1520V237H1521V237H1522V237H1523V237H1524V237H1525V237H1526V237H1527V237H1528V237H1529V237H1530V237H1531V237H1532V237H1533V237H1534V237H1535V237H1536V237H1537V237H1538V237H1539V237H1540V237H1541V237H1542V237H1543V237H1544V237H1545V237H1546V237H1547V237H1548V237H1549V237H1550V237H1551V237H1552V237H1553V237H1554V237H1555V237H1556V237H1557V237H1558V237H1559V237H1560V237H1561V237H1562V237H1563V237H1564V237H1565V237H1566V237H1567V237H1568V237H1569V237H1570V237H1571V237H1572V237H1573V237H1574V237H1575V237H1576V237H1577V237H1578V237H1579V237H1580V237H1581V237H1582V237H1583V237H1584V237H1585V237H1586V237H1587V237H1588V237H1589V237H1590V237H1591V237H1592V237H1593V237H1594V237H1595V237H1596V237H1597V237H1598V237H1599V237H1600V237H1601V237H1602V237H1603V237H1604V237H1605V237H1606V237H1607V237H1608V237H1609V237H1610V237H1611V237H1612V237H1613V237H1614V237H1615V237H1616V237H1617V237H1618V237H1619V237H1620V237H1621V237H1622V237H1623V237H1624V237H1625V237H1626V237H1627V237H1628V237H1629V237H1630V237H1631V237H1632V237H1633V237H1634V237H1635V237H1636V237H1637V237H1638V237H1639V237H1640V237H1641V237H1642V237H1643V237H1644V237H1645V237H1646V237H1647V237H1648V237H1649V237H1650V237H1651V237H1652V237H1653V237H1654V237H1655V237H1656V237H1657V237H1658V237H1659V237H1660V237H1661V237H1662V237H1663V237H1664V237H1665V237H1666V237H1667V237H1668V237H1669V237H1670V237H1671V237H1672V237H1673V237H1674V237H1675V237H1676V237H1677V237H1678V237H1679V237H1680V237H1681V237H1682V237H1683V237H1684V237H1685V237H1686V237H1687V237H1688V237H1689V237H1690V237H1691V237H1692V237H1693V237H1694V237H1695V237H1696V237H1697V237H1698V237H1699V237H1700V237H1701V237H1702V237H1703V237H1704V237H1705V237H1706V237H1707V237H1708V237H1709V237H1710V237H1711V237H1712V237H1713V237H1714V237H1715V237H1716V237H1717V237H1718V237H1719V237H1720V237H1721V237H1722V237H1723V237H1724V237H1725V237H1726V237H1727V237H1728V237H1729V237H1730V237H1731V237H1732V237H1733V237H1734V237H1735V237H1736V237H1737V237H1738V237H1739V237H1740V237H1741V237H1742V237H1743V237H1744V237H1745V237H1746V237H1747V237H1748V237H1749V237H1750V237H1751V237H1752V237H1753V237H1754V237H1755V237H1756V237H1757V237H1758V237H1759V237H1760V237H1761V237H1762V237H1763V237H1764V237H1765V237H1766V237H1767V237H1768V237H1769V237H1770V237H1771V237H1772V237H1773V237H1774V237H1775V237H1776V237H1777V237H1778V237H1779V237H1780V237H1781V237H1782V237H1783V237H1784V237H1785V237H1786V237H1787V237H1788V237H1789V237H1790V237H1791V237H1792V237H1793V237H1794V237H1795V237H1796V237H1797V237H1798V237H1799V237H1800V237H1801V237H1802V237H1803V237H1804V237H1805V237H1806V237H1807V237H1808V237H1809V237H1810V237H1811V237H1812V237H1813V237H1814V237H1815V237H1816V237H1817V237H1818V237H1819V237H1820V237H1821V237H1822V237H1823V237H1824V237H1825V237H1826V237H1827V237H1828V237H1829V237H1830V237H1831V237H1832V237H1833V237H1834V237H1835V237H1836V237H1837V237H1838V237H1839V237H1840V237H1841V237H1842V237H1843V237H1844V237H1845V237H1846V237H1847V237H1848V237H1849V237H1850V237H1851V237H1852V237H1853V237H1854V237H1855V237H1856V237H1857V237H1858V237H1859V237H1860V237H1861V237H1862V237H1863V237H1864V237H1865V237H1866V237H1867V237H1868V237H1869V237H1870V237H1871V237H1872V237H1873V237H1874V237H1875V237H1876V237H1877V237H1878V237H1879V237H1880V237H1881V237H1882V237H1883V237H1884V237H1885V237H1886V237H1887V237H1888V237H1889V237H1890V237H1891V237H1892V237H1893V237H1894V237H1895V237H1896V237H1897V237H1898V237H1899V237H1900V237H1901V237H1902V237H1903V237H1904V237H1905V237H1906V237H1907V237H1908V237H1909V238Z" fill="#ffc000"/>
<rect x="17" y="237" width="1892" height="1" fill="#d4a000"/>
<path d="M395 479V310h1V479zM401 479V364h1V479zM407 479V398h1V479zM413 479V413h1V479zM419 479V422h1V479zM425 479V428h1V479zM431 479V432h1V479zM436 479V436h1V479zM442 479V439h1V479zM448 479V440h1V479zM454 479V443h1V479zM460 479V444h1V479zM466 479V446h1V479zM472 479V447h1V479zM478 479V448h1V479zM484 479V448h1V479zM490 479V451h1V479zM496 479V451h1V479zM502 479V452h1V479zM507 479V452h1V479zM513 479V452h1V479zM519 479V454h1V479zM525 479V454h1V479zM531 479V454h1V479zM537 479V455h1V479zM543 479V455h1V479zM549 479V455h1V479zM555 479V456h1V479zM561 479V457h1V479zM567 479V457h1V479zM573 479V458h1V479zM578 479V458h1V479zM584 479V458h1V479zM590 479V458h1V479zM596 479V459h1V479zM602 479V459h1V479zM608 479V459h1V479zM614 479V459h1V479zM620 479V459h1V479zM626 479V460h1V479zM632 479V460h1V479zM638 479V460h1V479zM644 479V460h1V479zM649 479V460h1V479zM655 479V460h1V479zM661 479V461h1V479zM667 479V461h1V479zM673 479V461h1V479zM679 479V461h1V479zM685 479V461h1V479zM691 479V461h1V479zM697 479V461h1V479zM703 479V461h1V479zM709 479V461h1V479zM715 479V462h1V479zM720 479V462h1V479zM726 479V462h1V479zM732 479V462h1V479zM738 479V462h1V479zM744 479V462h1V479zM750 479V462h1V479zM756 479V462h1V479zM762 479V462h1V479zM768 479V462h1V479zM774 479V462h1V479zM780 479V462h1V479zM786 479V462h1V479zM791 479V463h1V479zM797 479V463h1V479zM803 479V463h1V479zM809 479V463h1V479zM815 479V463h1V479zM821 479V463h1V479zM827 479V463h1V479zM833 479V463h1V479zM839 479V463h1V479zM845 479V463h1V479zM851 479V463h1V479zM857 479V463h1V479zM862 479V463h1V479zM868 479V463h1V479zM874 479V463h1V479zM880 479V463h1V479zM886 479V463h1V479zM892 479V463h1V479zM898 479V463h1V479zM904 479V463h1V479zM910 479V463h1V479zM916 479V463h1V479zM922 479V463h1V479zM928 479V463h1V479zM933 479V463h1V479zM939 479V463h1V479zM945 479V463h1V479zM951 479V463h1V479zM957 479V463h1V479zM963 479V463h1V479zM969 479V463h1V479zM975 479V463h1V479zM981 479V463h1V479zM987 479V463h1V479zM993 479V463h1V479zM999 479V463h1V479zM1004 479V463h1V479zM1010 479V463h1V479zM1016 479V463h1V479zM1022 479V463h1V479zM1028 479V463h1V479zM1034 479V463h1V479zM1040 479V463h1V479zM1046 479V463h1V479zM1052 479V463h1V479zM1058 479V463h1V479zM1064 479V463h1V479zM1070 479V463h1V479zM1075 479V463h1V479zM1081 479V463h1V479zM1087 479V463h1V479zM1093 479V463h1V479zM1099 479V463h1V479zM1105 479V463h1V479zM1111 479V463h1V479zM1117 479V463h1V479zM1123 479V463h1V479zM1129 479V463h1V479zM1135 479V463h1V479zM1141 479V462h1V479zM1146 479V462h1V479zM1152 479V462h1V479zM1158 479V462h1V479zM1164 479V462h1V479zM1170 479V462h1V479zM1176 479V462h1V479zM1182 479V462h1V479zM1188 479V462h1V479zM1194 479V462h1V479zM1200 479V462h1V479zM1206 479V462h1V479zM1212 479V462h1V479zM1217 479V461h1V479zM1223 479V461h1V479zM1229 479V461h1V479zM1235 479V461h1V479zM1241 479V461h1V479zM1247 479V461h1V479zM1253 479V461h1V479zM1259 479V461h1V479zM1265 479V461h1V479zM1271 479V460h1V479zM1277 479V460h1V479zM1283 479V460h1V479zM1288 479V460h1V479zM1294 479V460h1V479zM1300 479V460h1V479zM1306 479V459h1V479zM1312 479V459h1V479zM1318 479V459h1V479zM1324 479V459h1V479zM1330 479V459h1V479zM1336 479V458h1V479zM1342 479V458h1V479zM1348 479V458h1V479zM1354 479V458h1V479zM1359 479V457h1V479zM1365 479V457h1V479zM1371 479V456h1V479zM1377 479V455h1V479zM1383 479V455h1V479zM1389 479V455h1V479zM1395 479V454h1V479zM1401 479V454h1V479zM1407 479V454h1V479zM1413 479V452h1V479zM1419 479V452h1V479zM1425 479V452h1V479zM1430 479V451h1V479zM1436 479V451h1V479zM1442 479V448h1V479zM1448 479V448h1V479zM1454 479V447h1V479zM1460 479V446h1V479zM1466 479V444h1V479zM1472 479V443h1V479zM1478 479V440h1V479zM1484 479V439h1V479zM1490 479V436h1V479zM1496 479V432h1V479zM1501 479V428h1V479zM1507 479V422h1V479zM1513 479V413h1V479zM1519 479V398h1V479zM1525 479V364h1V479zM1531 479V310h1V479z" fill="#06bcf8"/>
<rect x="17" y="478" width="1892" height="1" fill="#06bcf8"/>
<path d="M310 719h1v-2h-1zM316 719h1v-2h-1zM322 719h1v-2h-1zM328 719h1v-2h-1zM334 719h1v-2h-1zM340 719h1v-3h-1zM346 719h1v-6h-1zM352 719h1v-13h-1zM358 719h1v-25h-1zM364 719h1v-43h-1zM370 719h1v-66h-1zM375 719h1v-89h-1zM381 719h1v-117h-1zM387 719h1v-142h-1zM393 719h1v-161h-1zM399 719h1v-170h-1zM405 719h1v-169h-1zM411 719h1v-162h-1zM417 719h1v-150h-1zM423 719h1v-138h-1zM429 719h1v-126h-1zM435 719h1v-115h-1zM441 719h1v-107h-1zM446 719h1v-101h-1zM452 719h1v-96h-1zM458 719h1v-91h-1zM464 719h1v-87h-1zM470 719h1v-84h-1zM476 719h1v-81h-1zM482 719h1v-78h-1zM488 719h1v-76h-1zM494 719h1v-74h-1zM500 719h1v-72h-1zM506 719h1v-70h-1zM512 719h1v-69h-1zM517 719h1v-67h-1zM523 719h1v-66h-1zM529 719h1v-65h-1zM535 719h1v-64h-1zM541 719h1v-63h-1zM547 719h1v-61h-1zM553 719h1v-61h-1zM559 719h1v-60h-1zM565 719h1v-59h-1zM571 719h1v-58h-1zM577 719h1v-57h-1zM583 719h1v-56h-1zM588 719h1v-56h-1zM594 719h1v-55h-1zM600 719h1v-55h-1zM606 719h1v-54h-1zM612 719h1v-53h-1zM618 719h1v-53h-1zM624 719h1v-52h-1zM630 719h1v-52h-1zM636 719h1v-51h-1zM642 719h1v-51h-1zM648 719h1v-51h-1zM654 719h1v-50h-1zM659 719h1v-50h-1zM665 719h1v-50h-1zM671 719h1v-49h-1zM677 719h1v-49h-1zM683 719h1v-48h-1zM689 719h1v-48h-1zM695 719h1v-48h-1zM701 719h1v-48h-1zM707 719h1v-47h-1zM713 719h1v-47h-1zM719 719h1v-47h-1zM725 719h1v-47h-1zM730 719h1v-46h-1zM736 719h1v-46h-1zM742 719h1v-46h-1zM748 719h1v-46h-1zM754 719h1v-45h-1zM760 719h1v-45h-1zM766 719h1v-45h-1zM772 719h1v-45h-1zM778 719h1v-45h-1zM784 719h1v-45h-1zM790 719h1v-44h-1zM796 719h1v-44h-1zM801 719h1v-44h-1zM807 719h1v-44h-1zM813 719h1v-44h-1zM819 719h1v-44h-1zM825 719h1v-44h-1zM831 719h1v-44h-1zM837 719h1v-43h-1zM843 719h1v-43h-1zM849 719h1v-43h-1zM855 719h1v-43h-1zM861 719h1v-43h-1zM867 719h1v-43h-1zM872 719h1v-43h-1zM878 719h1v-43h-1zM884 719h1v-43h-1zM890 719h1v-43h-1zM896 719h1v-43h-1zM902 719h1v-43h-1zM908 719h1v-43h-1zM914 719h1v-43h-1zM920 719h1v-43h-1zM926 719h1v-43h-1zM932 719h1v-43h-1zM938 719h1v-42h-1zM943 719h1v-42h-1zM949 719h1v-42h-1zM955 719h1v-42h-1zM961 719h1v-42h-1zM967 719h1v-42h-1zM973 719h1v-42h-1zM979 719h1v-43h-1zM985 719h1v-43h-1zM991 719h1v-43h-1zM997 719h1v-43h-1zM1003 719h1v-43h-1zM1009 719h1v-43h-1zM1014 719h1v-43h-1zM1020 719h1v-43h-1zM1026 719h1v-43h-1zM1032 719h1v-43h-1zM1038 719h1v-43h-1zM1044 719h1v-43h-1zM1050 719h1v-43h-1zM1056 719h1v-43h-1zM1062 719h1v-43h-1zM1068 719h1v-43h-1zM1074 719h1v-43h-1zM1080 719h1v-44h-1zM1085 719h1v-44h-1zM1091 719h1v-44h-1zM1097 719h1v-44h-1zM1103 719h1v-44h-1zM1109 719h1v-44h-1zM1115 719h1v-44h-1zM1121 719h1v-44h-1zM1127 719h1v-45h-1zM1133 719h1v-45h-1zM1139 719h1v-45h-1zM1145 719h1v-45h-1zM1151 719h1v-45h-1zM1156 719h1v-45h-1zM1162 719h1v-46h-1zM1168 719h1v-46h-1zM1174 719h1v-46h-1zM1180 719h1v-46h-1zM1186 719h1v-47h-1zM1192 719h1v-47h-1zM1198 719h1v-47h-1zM1204 719h1v-47h-1zM1210 719h1v-48h-1zM1216 719h1v-48h-1zM1222 719h1v-48h-1zM1227 719h1v-48h-1zM1233 719h1v-49h-1zM1239 719h1v-49h-1zM1245 719h1v-49h-1zM1251 719h1v-50h-1zM1257 719h1v-50h-1zM1263 719h1v-51h-1zM1269 719h1v-51h-1zM1275 719h1v-52h-1zM1281 719h1v-52h-1zM1287 719h1v-53h-1zM1293 719h1v-53h-1zM1298 719h1v-53h-1zM1304 719h1v-54h-1zM1310 719h1v-55h-1zM1316 719h1v-55h-1zM1322 719h1v-56h-1zM1328 719h1v-57h-1zM1334 719h1v-57h-1zM1340 719h1v-58h-1zM1346 719h1v-59h-1zM1352 719h1v-60h-1zM1358 719h1v-61h-1zM1364 719h1v-62h-1zM1369 719h1v-62h-1zM1375 719h1v-64h-1zM1381 719h1v-65h-1zM1387 719h1v-66h-1zM1393 719h1v-67h-1zM1399 719h1v-69h-1zM1405 719h1v-70h-1zM1411 719h1v-72h-1zM1417 719h1v-74h-1zM1423 719h1v-76h-1zM1429 719h1v-79h-1zM1435 719h1v-81h-1zM1440 719h1v-84h-1zM1446 719h1v-87h-1zM1452 719h1v-91h-1zM1458 719h1v-95h-1zM1464 719h1v-101h-1zM1470 719h1v-108h-1zM1476 719h1v-117h-1zM1482 719h1v-127h-1zM1488 719h1v-139h-1zM1494 719h1v-152h-1zM1500 719h1v-163h-1zM1506 719h1v-170h-1zM1511 719h1v-170h-1zM1517 719h1v-161h-1zM1523 719h1v-143h-1zM1529 719h1v-118h-1zM1535 719h1v-90h-1zM1541 719h1v-63h-1zM1547 719h1v-40h-1zM1553 719h1v-23h-1zM1559 719h1v-12h-1zM1565 719h1v-6h-1zM1571 719h1v-2h-1zM1577 719h1v-2h-1zM1582 719h1v-2h-1zM1588 719h1v-2h-1zM1594 719h1v-2h-1zM1600 719h1v-2h-1z" fill="#fd6490"/>
<rect x="17" y="719" width="1892" height="1" fill="#fd6490"/>
<path d="M7 237h10v2h-9v2h-1z" fill="#ffc000"/>
<text x="5" y="234" font-size="10" fill="#ffc000">F1</text>
<path d="M7 478h10v2h-9v2h-1z" fill="#06bcf8"/>
<text x="5" y="475" font-size="10" fill="#06bcf8">F3</text>
<path d="M7 719h10v2h-9v2h-1z" fill="#fd6490"/>
<text x="5" y="716" font-size="10" fill="#fd6490">F2</text><path d="M937.5 267L941.5 275H933.5Z" fill="#ffc000"/><path d="M964.5 508L968.5 516H960.5Z" fill="#08c4fa"/><path d="M956.5 749L960.5 757H952.5Z" fill="#f4628e"/>
<path d="M672 80.5H830M752 81L843 113" stroke="#fff" stroke-width="1" fill="none"/>
<path d="M273 379.5H384M331 380L396 394.5" stroke="#fff" stroke-width="1" fill="none"/>
<path d="M122 658.5H362M247 659L377 673.5" stroke="#fff" stroke-width="1" fill="none"/>

</svg>
<div class="lbl" style="left:967px;top:41px;width:38px;background:#ffc000">2.66 M#</div>
<div class="lbl" style="left:925px;top:255px;width:35px;background:#ffc000">-380 k#</div>
<div class="lbl" style="left:20px;top:141px;width:40px;background:#ffc000">-243 mV</div>
<div class="lbl" style="left:1871px;top:155px;width:36px;background:#ffc000">257 mV</div>
<div class="lbl" style="left:967px;top:282px;width:38px;background:#08c4fa">79.8 M#</div>
<div class="lbl" style="left:919px;top:496px;width:41px;background:#08c4fa">-11.4 M#</div>
<div class="lbl" style="left:20px;top:382px;width:40px;background:#08c4fa">-250 mV</div>
<div class="lbl" style="left:1871px;top:396px;width:36px;background:#08c4fa">250 mV</div>
<div class="lbl" style="left:967px;top:523px;width:38px;background:#f4628e">30.8 M#</div>
<div class="lbl" style="left:924px;top:737px;width:36px;background:#f4628e">-4.4 M#</div>
<div class="lbl" style="left:20px;top:623px;width:40px;background:#f4628e">-248 mV</div>
<div class="lbl" style="left:1871px;top:637px;width:36px;background:#f4628e">252 mV</div>
<div class="txt" style="left:672px;top:68px;font-size:11px;line-height:13px">Gaussian or Normal Distribution</div>
<div class="txt" style="left:273px;top:367px;font-size:11px;line-height:13px">Sinusoidal Distribution</div>
<div class="txt" style="left:122px;top:646px;font-size:11px;line-height:13px">Combined Sinusoidal and Gaussian Distributions</div>

<!-- descriptor boxes -->
<div class="desc" style="left:4px">
 <div class="badge" style="background:#ffc000">F1</div>
 <div class="l h" style="top:0px">hist(C1)</div>
 <div class="l" style="top:16px">380 k#/div</div>
 <div class="l" style="top:30px">50.0 mV/div</div>
 <div class="l" style="top:44px">2.00000 G#</div>
</div>
<div class="desc" style="left:104px;border-color:#f0607e;background:radial-gradient(ellipse 70% 45% at 55% 100%,rgba(230,80,125,0.85) 0%,rgba(200,75,115,0.6) 45%,rgba(160,70,100,0) 100%),linear-gradient(to bottom,#646a7d 0px,#5a5f72 14px,#4e5366 29px,#40434f 31px,#4a4656 40px,#6a4a5e 58px)">
 <div class="badge" style="background:#f0607e;top:3px">F2</div>
 <div class="l h" style="top:1px">hist(C2)</div>
 <div class="l" style="top:17px">4.40 M#/div</div>
 <div class="l" style="top:31px">50.0 mV/div</div>
 <div class="l" style="top:45px">2.00000 G#</div>
</div>
<div class="desc" style="left:204px">
 <div class="badge" style="background:#10c0f4">F3</div>
 <div class="l h" style="top:0px">hist(C3)</div>
 <div class="l" style="top:16px">11.4 M#/div</div>
 <div class="l" style="top:30px">50.0 mV/div</div>
 <div class="l" style="top:44px">2.00000 G#</div>
</div>
<div class="txt" style="left:7px;top:1061px;font-size:15.7px;line-height:17px;color:#f0f0f0;font-weight:bold;transform:scaleX(0.795);transform-origin:0 0">TELEDYNE</div>
<div class="txt" style="left:77px;top:1061px;font-size:15.7px;line-height:17px;color:#e0e0e0;transform:scaleX(0.70);transform-origin:0 0">LECROY</div>

<div class="info" style="left:1703px;width:110px">
 <div class="ws"></div>
 <div class="r dk" style="left:2px;top:0px">Timebase</div>
 <div class="r dk" style="right:2px;top:0px">0.00 μs</div>
 <div class="r" style="right:0px;top:16px">1.00 μs/div</div>
 <div class="r" style="left:2px;top:30px">400 kS</div>
 <div class="r" style="right:2px;top:30px">40 GS/s</div>
</div>
<div class="info" style="left:1818px;width:95px">
 <div class="ws"></div>
 <div class="r dk" style="left:2px;top:0px">Trigger</div>
 <div style="position:absolute;left:57px;top:1px;width:17px;height:12px;background:#000;border-radius:3px;color:#fff;font-size:11px;line-height:12px;text-align:center">C1</div>
 <div style="position:absolute;left:75px;top:1px;width:18px;height:12px;background:#000;border-radius:3px;color:#fff;font-size:11px;line-height:12px;text-align:center">DC</div>
 <div class="r" style="left:2px;top:16px">Normal</div>
 <div class="r" style="right:0px;top:16px">0.0 mV</div>
 <div class="r" style="left:2px;top:30px">Edge</div>
 <div class="r" style="right:0px;top:30px">Positive</div>
</div>
<div class="txt" style="left:1786px;top:1065px;font-size:12px;line-height:14px">8/16/2016 2:33:12 PM</div>
</body></html>
